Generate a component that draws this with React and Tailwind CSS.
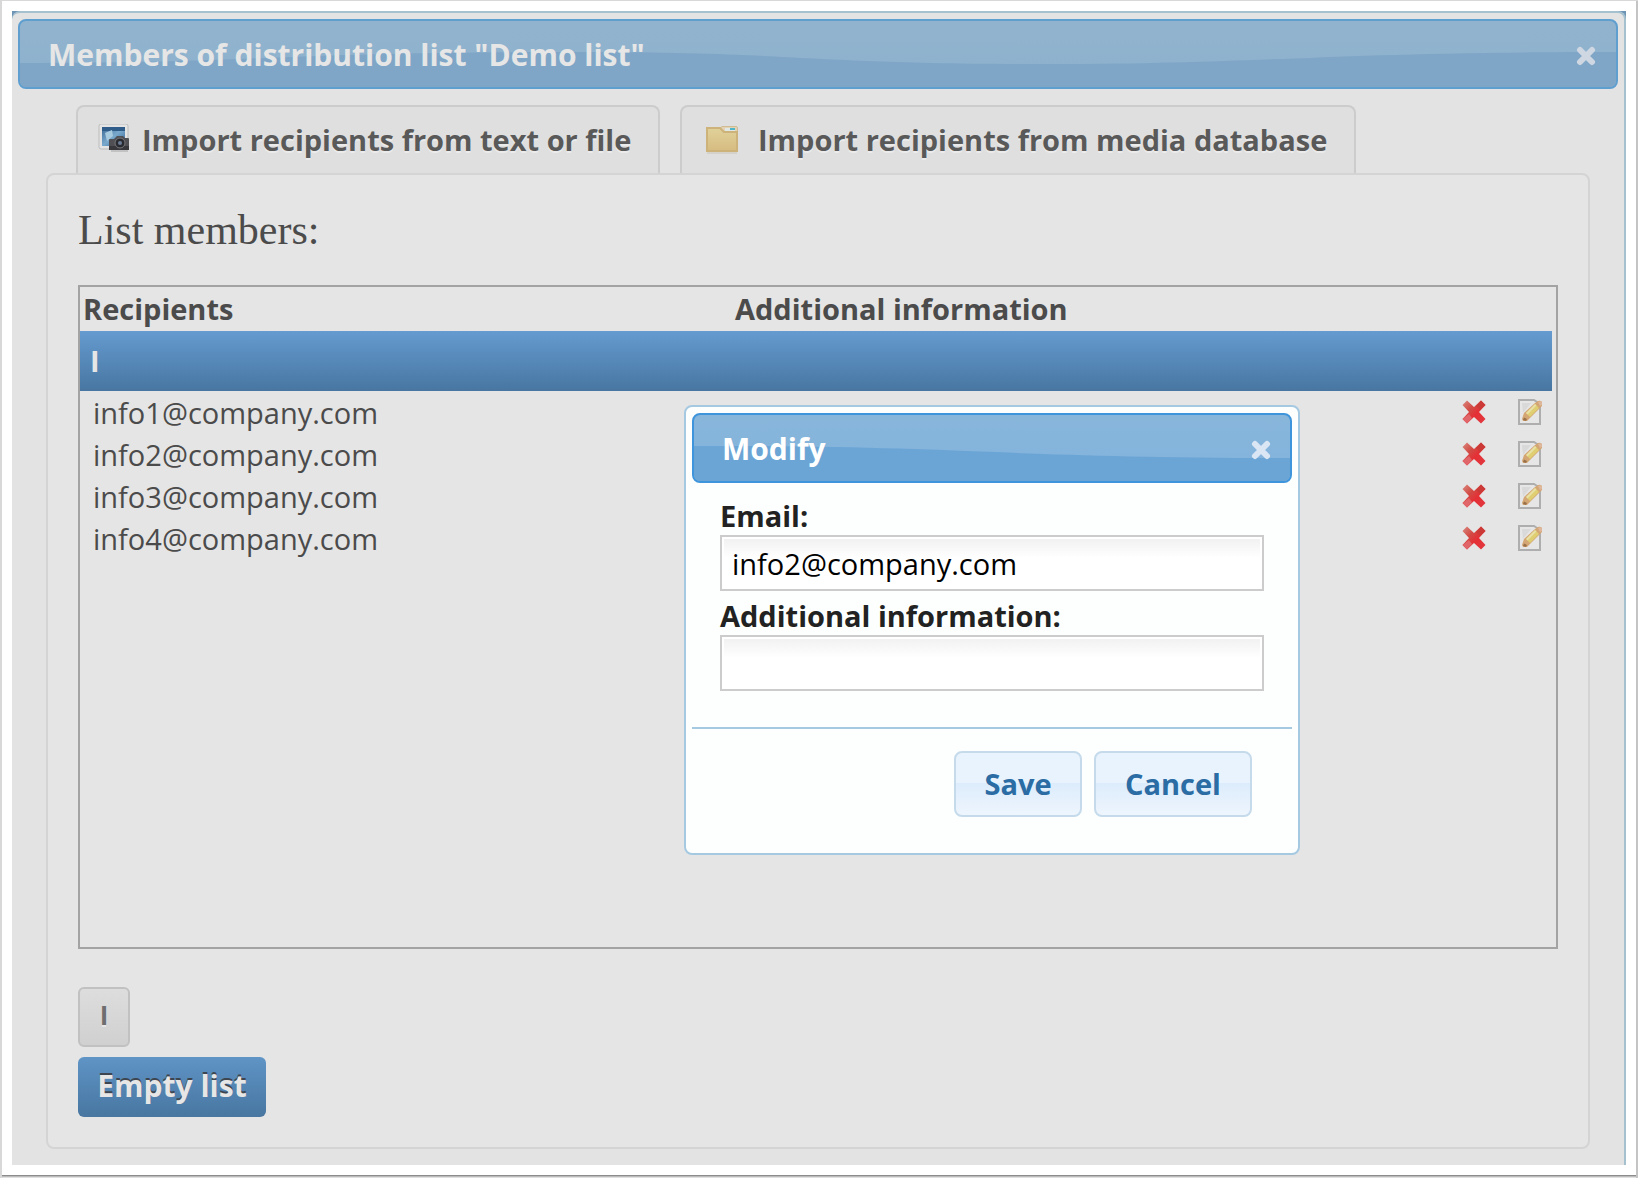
import { useState } from 'react'

const members = [
  'info1@company.com',
  'info2@company.com',
  'info3@company.com',
  'info4@company.com',
]

function CloseIcon({ className }) {
  return (
    <svg viewBox="0 0 20 20" className={className} aria-hidden="true">
      <path d="M4 4 L16 16 M16 4 L4 16" stroke="currentColor" strokeWidth="6" strokeLinecap="round" />
    </svg>
  )
}

function DeleteIcon() {
  return (
    <svg viewBox="0 0 24 24" className="size-6" aria-hidden="true">
      <defs>
        <linearGradient id="delete-fill" x1="0" y1="0" x2="1" y2="1">
          <stop offset="0" stopColor="#d98a80" />
          <stop offset="0.35" stopColor="#d24a44" />
          <stop offset="0.6" stopColor="#e52f35" />
          <stop offset="1" stopColor="#e03a40" />
        </linearGradient>
      </defs>
      <path
        d="M5 0.5 L12 7 L19 0.5 L23.5 5 L17 12 L23.5 19 L19 23.5 L12 17 L5 23.5 L0.5 19 L7 12 L0.5 5 Z"
        fill="url(#delete-fill)"
      />
      <path d="M7 14 L0.5 19 L5 23.5 L10 18 Z" fill="#e0666a" />
      <path d="M14 6 L19 0.5 L23.5 5 L18 10 Z" fill="#cb3a36" />
    </svg>
  )
}

function EditIcon() {
  return (
    <svg viewBox="0 0 24 26" className="h-[26px] w-6" aria-hidden="true">
      <path d="M1 1 H16 L22 5 V25 H1 Z" fill="#e6e6e6" stroke="#aeaeae" strokeWidth="2" />
      <path d="M4 4 H13 L5 14 Z" fill="#d9d9d9" />
      <path d="M4 20 L6 14 L17 4 L20 2 Q24 1 24 4 V7 L12 19 L9 22 H5 Z" fill="#d3a674" />
      <path d="M8 14 L17 5 L21 9 L12 18 Z" fill="#dfce72" />
      <path d="M8 14 L17 5 L18.5 6.500 L9.500 15.500 Z" fill="#e8e0a4" />
      <path d="M20 3 L23 2 L24 4 V6 L22 7 Z" fill="#dfb79a" />
      <path d="M5 21 L6 18.500 L9 20 L8 22 Z" fill="#9a7048" />
    </svg>
  )
}

function PhotoIcon() {
  return (
    <svg viewBox="0 0 32 32" className="size-8" aria-hidden="true">
      <defs>
        <linearGradient id="photo-sky" x1="0" y1="0" x2="1" y2="1">
          <stop offset="0" stopColor="#3b6793" />
          <stop offset="0.5" stopColor="#7aa9cd" />
          <stop offset="1" stopColor="#2f5f91" />
        </linearGradient>
      </defs>
      <rect x="1" y="0" width="29" height="25" rx="2" fill="#e4e4e4" stroke="#bcbcbc" />
      <rect x="4" y="3" width="23" height="19" fill="url(#photo-sky)" />
      <path d="M4 3 H27 V7 H4 Z" fill="#2f5c88" />
      <path d="M7 9 L14 6 L15 12 L9 17 Z" fill="#a9cbe0" />
      <path d="M11 16 Q11 15 12 15 H16 L19 12 H25 L27 14 H30 Q31 14 31 15 V26 H11 Z" fill="#505054" />
      <path d="M11 22 H31 V26 H11 Z" fill="#38383c" />
      <path d="M13 27 H30" stroke="#a5a5a5" />
      <circle cx="22" cy="19" r="5" fill="#2a2b30" stroke="#77777c" />
      <circle cx="22" cy="19" r="2" fill="#6b7d96" />
    </svg>
  )
}

function FolderIcon() {
  return (
    <svg viewBox="0 0 32 28" className="h-7 w-8" aria-hidden="true">
      <defs>
        <linearGradient id="folder-fill" x1="0" y1="0" x2="0" y2="1">
          <stop offset="0" stopColor="#e0d29a" />
          <stop offset="1" stopColor="#d6bb80" />
        </linearGradient>
      </defs>
      <path d="M14 2 Q15 0.500 17 0.500 H30 Q31.500 0.500 31.500 2 V8 H15 Z" fill="#e3d3b4" stroke="#d0bc94" />
      <rect x="19" y="2" width="10" height="3" fill="#dfe8e4" />
      <rect x="24" y="2" width="5" height="2" fill="#4fb5c8" />
      <path d="M1 2 H14 L18 6 H31 V25 H1 Z" fill="url(#folder-fill)" stroke="#cdb27a" strokeWidth="2" />
      <path d="M1 27 H31" stroke="#c9c4b6" />
    </svg>
  )
}

function MemberRow({ email }) {
  return (
    <tr className="h-[42px]">
      <td className="pt-[2px] pl-[13px] leading-10">{email}</td>
      <td />
      <td>
        <div className="flex items-center justify-end gap-8 pr-[10px]">
          <button type="button" aria-label={`Delete ${email}`}>
            <DeleteIcon />
          </button>
          <button type="button" aria-label={`Edit ${email}`}>
            <EditIcon />
          </button>
        </div>
      </td>
    </tr>
  )
}

function ModifyDialog() {
  const [email, setEmail] = useState('info2@company.com')
  const [info, setInfo] = useState('')

  const inputClass =
    'block h-14 w-full border-2 border-[#cccccc] bg-white bg-linear-to-b from-[#f0f0f0] to-white to-40% px-[10px] text-[29px] text-black shadow-[inset_0_0_0_2px_#ffffff] outline-none'
  const buttonClass =
    'h-[66px] rounded-lg border-2 border-[#c5dbec] bg-linear-to-b from-[#e9f3fd] from-48% via-[#dcecfc] via-48% to-[#eef5fd] font-bold text-[#2a6ca3]'

  return (
    <div
      role="dialog"
      aria-labelledby="modify-title"
      className="absolute top-[405px] left-[684px] w-[616px] rounded-lg border-2 border-[#a6c9e2] bg-[#fcfffd] p-[6px] text-[#222222]"
    >
      <header className="relative flex h-[70px] items-center justify-between overflow-hidden rounded-lg border-2 border-[#3f95db] bg-linear-to-b from-[#88b6db] to-[#82b2dc] pr-[19px] pl-7">
        <svg viewBox="0 0 596 66" preserveAspectRatio="none" className="absolute inset-0 size-full" aria-hidden="true">
          <path d="M0 31 C250 30 320 43 596 43 V66 H0 Z" fill="#6ba5d5" />
        </svg>
        <h2 id="modify-title" className="relative text-[30px] font-bold text-white">
          Modify
        </h2>
        <button type="button" aria-label="Close" className="relative mt-1 text-[#dbe6f5]">
          <CloseIcon className="size-5" />
        </button>
      </header>
      <form onSubmit={(event) => event.preventDefault()}>
        <div className="px-7 pt-4 pb-9">
          <label htmlFor="email" className="block h-9 leading-[34px] font-bold">
            Email:
          </label>
          <input id="email" value={email} onChange={(event) => setEmail(event.target.value)} className={inputClass} />
          <label htmlFor="info" className="mt-2 block h-9 leading-[34px] font-bold">
            Additional information:
          </label>
          <input id="info" value={info} onChange={(event) => setInfo(event.target.value)} className={inputClass} />
        </div>
        <div className="flex justify-end gap-3 border-t-2 border-[#a6c9e2] pt-[22px] pr-10 pb-[30px]">
          <button type="submit" className={`w-32 ${buttonClass}`}>
            Save
          </button>
          <button type="button" className={`w-[158px] ${buttonClass}`}>
            Cancel
          </button>
        </div>
      </form>
    </div>
  )
}

export default function App() {
  const tabClass =
    'flex h-[68px] items-center rounded-t-lg border-2 border-b-0 border-[#cccccc] bg-[#dfdfdf] whitespace-nowrap font-bold text-[#595959] [text-shadow:0_2px_0_#ebebeb]'

  return (
    <div className="relative bg-white px-3 pt-[11px] pb-[13px] font-['Open_Sans',sans-serif] text-[29px] text-[#4b4b4b] shadow-[inset_2px_1px_0_#d8d8d8,inset_-2px_0_0_#c4c4c4,inset_0_-1px_0_#e0e0e0,inset_0_-2px_0_#bbbbbb,inset_0_-3px_0_#8c8c8c]">
      <div className="bg-[#6d93b5]">
        <div className="rounded-t-lg border-t-2 border-r-2 border-[#a5c0cf] bg-[#e3e3e3] p-[6px] pb-4">
          <header className="relative flex h-[70px] items-center justify-between overflow-hidden rounded-lg border-2 border-[#5f9fd0] bg-linear-to-b from-[#92b3ce] to-[#8cb1cd] pr-5 pl-7">
            <svg viewBox="0 0 1596 66" preserveAspectRatio="none" className="absolute inset-0 size-full" aria-hidden="true">
              <path
                d="M0 42 C250 42 250 31 560 31 C780 31 780 43 1030 43 C1250 43 1300 31 1596 31 V66 H0 Z"
                fill="#7fa6c7"
              />
            </svg>
            <h1 className="relative text-[30px] font-bold text-[#e6e6e6]">Members of distribution list "Demo list"</h1>
            <button type="button" aria-label="Close" className="relative mt-1 text-[#cfd7e2]">
              <CloseIcon className="size-5" />
            </button>
          </header>

          <main className="mx-7 mt-4">
            <nav className="flex gap-5 px-[30px]">
              <a href="#file" className={`w-[584px] gap-3 pl-5 ${tabClass}`}>
                <PhotoIcon />
                Import recipients from text or file
              </a>
              <a href="#media" className={`w-[676px] gap-5 pl-6 ${tabClass}`}>
                <FolderIcon />
                Import recipients from media database
              </a>
            </nav>

            <section className="rounded-lg border-2 border-[#d4d4d4] bg-[#e5e5e5] px-[30px] pb-[30px]">
              <h2 className="h-[110px] pt-[30px] font-['Liberation_Serif',serif] text-[42px] leading-[50px]">
                List members:
              </h2>

              <div className="min-h-[664px] border-2 border-[#a3a3a3] pr-1">
                <table className="w-full table-fixed border-collapse text-left">
                  <thead>
                    <tr className="h-11 leading-10">
                      <th className="w-[652px] pl-[3px]">Recipients</th>
                      <th className="pl-[3px]">Additional information</th>
                      <th className="w-[160px]" />
                    </tr>
                  </thead>
                  <tbody>
                    <tr className="h-[60px] bg-linear-to-b from-[#659bd0] to-[#4876a1]">
                      <th colSpan={3} className="pl-[10px] text-[#e6e6e6]">
                        I
                      </th>
                    </tr>
                    {members.map((email) => (
                      <MemberRow key={email} email={email} />
                    ))}
                  </tbody>
                </table>
              </div>

              <div className="mt-[38px] flex flex-col items-start gap-[10px]">
                <button
                  type="button"
                  className="h-[60px] w-[52px] rounded-md border-2 border-[#c1c1c1] bg-linear-to-b from-[#dddddd] to-[#d0d0d0] pb-1 text-[26px] font-bold text-[#6e6e6e] [text-shadow:0_2px_0_#e6e6e6]"
                >
                  I
                </button>
                <button
                  type="button"
                  className="h-[60px] w-[188px] rounded-md bg-linear-to-b from-[#5f94c6] to-[#4876a1] pb-1 text-[30px] font-bold text-[#e6e6e6] [text-shadow:0_-2px_0_#3d4650]"
                >
                  Empty list
                </button>
              </div>
            </section>
          </main>
        </div>
      </div>

      <ModifyDialog />
    </div>
  )
}
